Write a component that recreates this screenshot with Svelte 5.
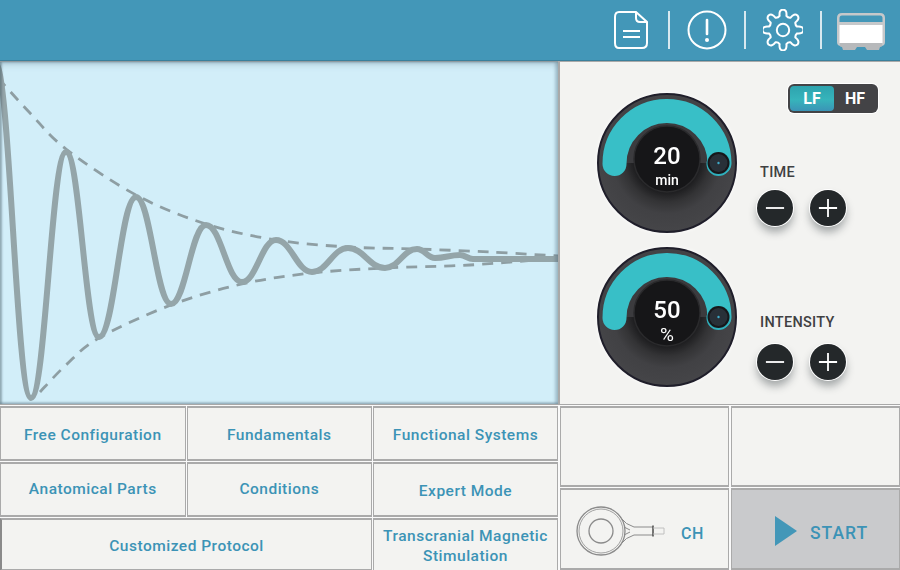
<script>
	// extrema of the damped wave, picked off the plot in px
	const wave = [
		[-5, 62], [31, 398], [66, 152], [99, 337], [136, 197], [171, 304], [206, 225], [242, 282],
		[276, 240], [312, 272], [348, 248], [385, 268], [417, 249], [435, 258], [460, 255], [473, 259], [560, 259]
	];
	const upper = [[-2, 78], [30, 113], [66, 149], [136, 195], [206, 224], [276, 240], [348, 247], [417, 249], [490, 252], [558, 256]];
	const lower = [[40, 392], [66, 365], [99, 338], [171, 305], [242, 284], [312, 273], [385, 268], [470, 265], [558, 258]];

	function wavePath(pts) {
		let d = `M${pts[0][0]} ${pts[0][1]}`;
		for (let i = 1; i < pts.length; i++) {
			const [x0, y0] = pts[i - 1];
			const [x1, y1] = pts[i];
			const k = (x1 - x0) * 0.42;
			d += ` C${x0 + k} ${y0} ${x1 - k} ${y1} ${x1} ${y1}`;
		}
		return d;
	}

	function smoothPath(pts) {
		let d = `M${pts[0][0]} ${pts[0][1]}`;
		for (let i = 0; i < pts.length - 1; i++) {
			const p0 = pts[i - 1] || pts[i];
			const p1 = pts[i];
			const p2 = pts[i + 1];
			const p3 = pts[i + 2] || p2;
			d += ` C${p1[0] + (p2[0] - p0[0]) / 6} ${p1[1] + (p2[1] - p0[1]) / 6} ${p2[0] - (p3[0] - p1[0]) / 6} ${p2[1] - (p3[1] - p1[1]) / 6} ${p2[0]} ${p2[1]}`;
		}
		return d;
	}

	function gearPath(cx, cy, teeth, rOut, rIn) {
		const pts = [];
		const step = (Math.PI * 2) / teeth;
		for (let i = 0; i < teeth; i++) {
			const a = i * step - Math.PI / 2;
			const at = (r, off) => `${(cx + r * Math.cos(a + off * step)).toFixed(2)} ${(cy + r * Math.sin(a + off * step)).toFixed(2)}`;
			pts.push(`${i ? 'L' : 'M'}${at(rIn, -0.3)}`);
			pts.push(`Q${at(rOut, -0.26)} ${at(rOut, 0)}`);
			pts.push(`Q${at(rOut, 0.26)} ${at(rIn, 0.3)}`);
			pts.push(`Q${at(rIn - 1.5, 0.5)} ${at(rIn, 0.7)}`);
		}
		return pts.join(' ') + ' Z';
	}

	const knobs = [
		{ id: 'a', value: '20', unit: 'min', label: 'TIME', unitSize: 14, unitWeight: 500, unitY: 92 },
		{ id: 'b', value: '50', unit: '%', label: 'INTENSITY', unitSize: 19, unitWeight: 400, unitY: 94 }
	];
</script>

<div class="screen">
	<header class="topbar">
		<div class="slot">
			<svg class="ic" width="36" height="40" viewBox="0 0 36 40">
				<path d="M6 2 H23 L34 12 V33 Q34 38 29 38 H6 Q2 38 2 33 V7 Q2 2 6 2 Z" />
				<path d="M23 2 V8 Q23 12 27 12 H34" />
				<path d="M10 21 H27 M10 27 H27" />
			</svg>
		</div>
		<span class="sep"></span>
		<div class="slot">
			<svg class="ic" width="40" height="40" viewBox="0 0 40 40">
				<circle cx="20" cy="20" r="18.5" />
				<path d="M20 10 V24" stroke-width="2.6" stroke-linecap="round" />
				<circle class="solid" cx="20" cy="30" r="2" />
			</svg>
		</div>
		<span class="sep"></span>
		<div class="slot">
			<svg class="ic" width="40" height="42" viewBox="0 0 40 42">
				<path d={gearPath(20, 21, 8, 20.5, 14.5)} stroke-linejoin="round" />
				<circle cx="20" cy="21" r="6.2" />
			</svg>
		</div>
		<span class="sep"></span>
		<div class="slot device">
			<svg width="48" height="37" viewBox="0 0 48 37">
				<path d="M5 0 H43 Q48 0 48 5 V29 Q48 33 44 33 H4 Q0 33 0 29 V5 Q0 0 5 0 Z" fill="#c6c8ca" />
				<path d="M5 2.5 H43 Q45.5 2.5 45.5 5 V9 H2.5 V5 Q2.5 2.5 5 2.5 Z" fill="#4397b8" />
				<rect x="2.5" y="12" width="43" height="18" fill="#fff" />
				<path d="M3 30 H45 V33 Q45 34 43 34 L42 37 H30 L28 34 H20 L18 37 H6 L5 34 Q3 34 3 33 Z" fill="#b7b9bb" />
			</svg>
		</div>
	</header>

	<section class="middle">
		<div class="chart">
			<svg width="558" height="342" viewBox="0 62 558 342">
				<path class="env" d={smoothPath(upper)} />
				<path class="env" d={smoothPath(lower)} />
				<path class="line" d={wavePath(wave)} />
			</svg>
		</div>

		<div class="panel">
			{#each knobs as k, i}
				<div class="row">
					<svg class="knob" width="144" height="144" viewBox="-2 -2 144 144">
						<defs>
							<radialGradient id="body-{k.id}" cx="70" cy="66" r="72" gradientUnits="userSpaceOnUse">
								<stop offset="0.46" stop-color="#1d1d1f" />
								<stop offset="0.6" stop-color="#333335" />
								<stop offset="0.76" stop-color="#414144" />
								<stop offset="1" stop-color="#454548" />
							</radialGradient>
						</defs>
						<circle cx="70" cy="70" r="69" fill="url(#body-{k.id})" stroke="#1f1e2a" stroke-width="2" />
						<path d="M33 70 A37 37 0 0 1 107 70" fill="none" stroke="#3b3b3e" stroke-width="9" />
						<path d="M17.5 71 A52.5 52.5 0 0 1 122.5 70" fill="none" stroke="#38bfc7" stroke-width="24" stroke-linecap="round" />
						<circle cx="70" cy="66" r="33" fill="#161618" stroke="#2a2a2c" stroke-width="1.5" />
						<circle cx="121.5" cy="71" r="12" fill="#2fb0bd" />
						<circle cx="121.5" cy="70" r="11" fill="#17171a" />
						<circle cx="121.5" cy="70" r="9" fill="#283038" />
						<circle cx="121.5" cy="70" r="1.2" fill="#3fa9c9" />
						<text class="val" x="70" y="71">{k.value}</text>
						<text class="unit" x="70" y={k.unitY} font-size={k.unitSize} font-weight={k.unitWeight}>{k.unit}</text>
					</svg>
					<div class="controls">
						{#if i === 0}
							<div class="toggle">
								<span class="opt on">LF</span>
								<span class="opt">HF</span>
							</div>
						{/if}
						<div class="label">{k.label}</div>
						<div class="btns">
							<button aria-label="decrease"><svg width="22" height="22" viewBox="0 0 22 22"><path d="M1 11 H21" /></svg></button>
							<button aria-label="increase"><svg width="22" height="22" viewBox="0 0 22 22"><path d="M1 11 H21 M11 1 V21" /></svg></button>
						</div>
					</div>
				</div>
			{/each}
		</div>
	</section>

	<section class="bottom">
		<div class="modes">
			<button class="cell top">Free Configuration</button>
			<button class="cell top">Fundamentals</button>
			<button class="cell top">Functional Systems</button>
			<button class="cell">Anatomical Parts</button>
			<button class="cell">Conditions</button>
			<button class="cell low">Expert Mode</button>
			<button class="cell wide">Customized Protocol</button>
			<button class="cell tight">Transcranial Magnetic<br />Stimulation</button>
		</div>
		<div class="actions">
			<div class="cell"></div>
			<div class="cell"></div>
			<button class="cell ch">
				<svg width="90" height="52" viewBox="0 0 90 52" fill="none" stroke="#8b8b8b">
					<circle cx="25" cy="26" r="24" stroke-width="1.3" />
					<circle cx="25" cy="26" r="22" stroke-width="0.8" />
					<circle cx="25" cy="26" r="12" stroke-width="1.3" />
					<path d="M44 12 Q50 20 58 22 H77 M44 40 Q50 32 58 30 H77 M48 22 L54 25 M48 30 L54 27" stroke-width="1" />
					<path d="M77 20.5 V31.5" stroke="#555" stroke-width="1.6" />
					<path d="M77 23 H88 V29 H77" stroke="#bbb" stroke-width="0.9" />
				</svg>
				<span>CH</span>
			</button>
			<button class="cell start">
				<svg width="22" height="30" viewBox="0 0 22 30"><path d="M0 0 L22 15 L0 30 Z" fill="#4397b8" /></svg>
				<span>START</span>
			</button>
		</div>
	</section>
</div>

<style>
	:global(body) {
		margin: 0;
		background: #f3f3f1;
	}

	.screen {
		width: 900px;
		height: 570px;
		overflow: hidden;
		display: flex;
		flex-direction: column;
		font-family: Roboto, 'Liberation Sans', sans-serif;
		background: #fafafa;
	}

	.topbar {
		height: 61px;
		flex: none;
		box-sizing: border-box;
		background: #4397b8;
		border-bottom: 1px solid #3a7f9b;
		display: flex;
		align-items: center;
		justify-content: flex-end;
	}
	.slot {
		width: 74px;
		display: flex;
		align-items: center;
		justify-content: center;
	}
	.slot.device {
		width: 78px;
		padding-top: 2px;
	}
	.ic {
		fill: none;
		stroke: #fff;
		stroke-width: 2;
	}
	.ic .solid {
		fill: #fff;
		stroke: none;
	}
	.sep {
		width: 2px;
		height: 38px;
		background: #d8e9f0;
	}

	.middle {
		height: 344px;
		flex: none;
		display: flex;
		border-bottom: 1px solid #a8a8a8;
		box-sizing: border-box;
	}
	.chart {
		position: relative;
		width: 558px;
		height: 342px;
		flex: none;
		background: #d2eef9;
		border-top: 1px solid #8f9a9f;
	}
	.chart svg {
		display: block;
	}
	.chart::after {
		content: '';
		position: absolute;
		inset: 0;
		box-shadow: inset 0 6px 7px -4px rgba(70, 100, 115, 0.3), inset 2px 0 2px rgba(70, 90, 100, 0.4), inset -3px 0 3px rgba(70, 100, 115, 0.3), inset 0 -2px 2px rgba(70, 100, 115, 0.25);
		pointer-events: none;
	}
	.env {
		fill: none;
		stroke: #8e9ea3;
		stroke-width: 2.8;
		stroke-dasharray: 11 8;
	}
	.line {
		fill: none;
		stroke: #94a5a9;
		stroke-width: 6;
		stroke-linejoin: round;
	}

	.panel {
		flex: 1;
		box-sizing: border-box;
		background: #f3f3f1;
		border-left: 2px solid #a9a9a9;
		border-top: 1px solid #a9a9a9;
		padding: 22px 0 0 35px;
		display: flex;
		flex-direction: column;
		gap: 10px;
	}
	.row {
		display: flex;
		gap: 21px;
		align-items: flex-start;
	}
	.row:first-child .knob {
		margin-top: 7px;
	}
	.knob {
		flex: none;
		display: block;
		filter: drop-shadow(0 0 2px rgba(255, 255, 255, 0.9));
	}
	.val {
		font-size: 24px;
		font-weight: 500;
		fill: #fff;
		text-anchor: middle;
	}
	.unit {
		fill: #fff;
		text-anchor: middle;
	}
	.controls {
		display: flex;
		flex-direction: column;
		padding-top: 69px;
	}
	.row:first-child .controls {
		padding-top: 0;
	}
	.toggle {
		display: flex;
		width: 90px;
		height: 29px;
		margin: 0 0 51px 28px;
		padding: 2px;
		box-sizing: border-box;
		background: #434346;
		border-radius: 6px;
		box-shadow: 0 0 0 1px #fff;
	}
	.opt {
		flex: 1;
		display: flex;
		align-items: center;
		justify-content: center;
		color: #fff;
		font-size: 16px;
		font-weight: 700;
		border-radius: 4px;
	}
	.opt.on {
		flex: 0 0 44px;
		background: linear-gradient(#2ea3ae, #36b4bb 55%, #3b94b6);
	}
	.label {
		font-size: 14.5px;
		font-weight: 500;
		letter-spacing: 0.3px;
		color: #3f4042;
		line-height: 18px;
	}
	.btns {
		display: flex;
		gap: 17px;
		margin-top: 8px;
		margin-left: -3px;
	}
	.row:last-child .btns {
		margin-top: 12px;
	}
	.btns button {
		width: 36px;
		height: 36px;
		padding: 0;
		border: none;
		border-radius: 50%;
		background: #24282a;
		display: flex;
		align-items: center;
		justify-content: center;
		box-shadow: 0 0 0 1px #fff, 0 6px 8px rgba(40, 50, 55, 0.4);
	}
	.btns svg {
		width: 20px;
		height: 20px;
		fill: none;
		stroke: #fff;
		stroke-width: 2;
	}

	.bottom {
		flex: 1;
		display: flex;
		gap: 2px;
		background: #fafafa;
		padding-top: 1px;
		min-height: 0;
	}
	.modes {
		width: 558px;
		display: grid;
		grid-template-columns: 185.5px 185.5px 185px;
		grid-template-rows: 55px 55px 53px;
		gap: 1px;
	}
	.actions {
		flex: 1;
		display: grid;
		grid-template-columns: 169px 169px;
		grid-template-rows: 81px 82px;
		gap: 1px 2px;
	}
	.cell {
		box-sizing: border-box;
		margin: 0;
		padding: 0;
		background: #f3f3f1;
		border: 2px solid #aaaaaa;
		border-left-width: 1px;
		border-right-width: 1px;
		color: #3c93b6;
		font: 500 15.5px/21px Roboto, 'Liberation Sans', sans-serif;
		letter-spacing: 0.5px;
		text-align: center;
	}
	.top {
		padding-top: 4px;
	}
	.wide {
		grid-column: span 2;
		border-left: 2px solid #8a8a8a;
		padding-top: 4px;
	}
	.low {
		padding-top: 3px;
	}
	.tight {
		padding-top: 1px;
		border-bottom: none;
		line-height: 20px;
	}
	.ch,
	.start {
		display: flex;
		align-items: center;
		padding-top: 4px;
	}
	.ch span,
	.start span {
		padding-top: 4px;
	}
	.ch {
		padding-left: 15px;
		gap: 15px;
		font-size: 16px;
		font-weight: 500;
	}
	.start {
		background: #c9cacc;
		padding-left: 43px;
		gap: 13px;
		font-size: 17.5px;
		font-weight: 500;
		letter-spacing: 1px;
	}
</style>
